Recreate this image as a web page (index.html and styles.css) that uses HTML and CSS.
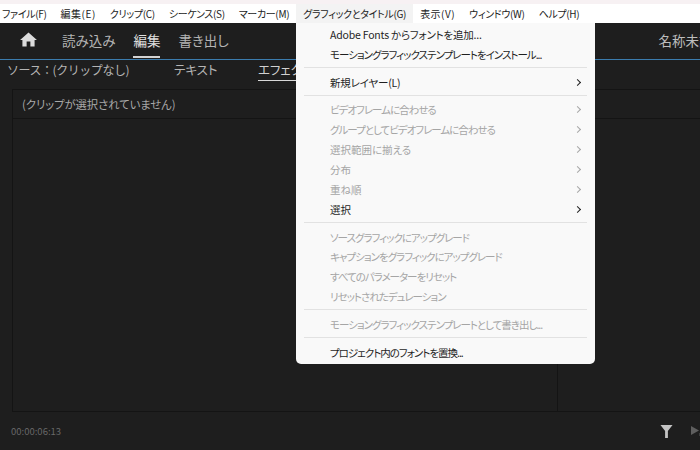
FILE: index.html
```html
<!DOCTYPE html>
<html>
  <head>
    <title>グラフィックとタイトル</title>
    <link rel="stylesheet" href="styles.css">
  </head>
  <body>
    <div class="menu-bar">
      <span class="menu-title">ファイル(F)</span>
      <span class="menu-title menu-title-wide">編集(E)</span>
      <span class="menu-title">クリップ(C)</span>
      <span class="menu-title">シーケンス(S)</span>
      <span class="menu-title">マーカー(M)</span>
      <span class="menu-title menu-title-open">グラフィックとタイトル(G)</span>
      <span class="menu-title menu-title-wide">表示(V)</span>
      <span class="menu-title">ウィンドウ(W)</span>
      <span class="menu-title">ヘルプ(H)</span>
    </div>

    <div class="app">
      <div class="workspace-bar">
        <svg class="home-icon" viewBox="0 0 18 16">
          <path d="M9 0.5 L18 8.5 H15.5 V15.5 H11 V10 H7 V15.5 H2.5 V8.5 H0 Z" fill="#dcdcdc"/>
        </svg>
        <span class="workspace-tab">読み込み</span>
        <span class="workspace-tab workspace-tab-active">編集</span>
        <span class="workspace-tab">書き出し</span>
        <span class="project-name">名称未設定</span>
      </div>

      <div class="panel-tabs">
        <span class="panel-tab panel-tab-source">ソース：(クリップなし)</span>
        <span class="panel-tab panel-tab-text">テキスト</span>
        <span class="panel-tab panel-tab-active">エフェクトコントロール</span>
      </div>

      <div class="panel">
        <div class="panel-header">(クリップが選択されていません)</div>
        <div class="panel-body">
          <div class="panel-left"></div>
          <div class="panel-right"></div>
        </div>
      </div>

      <div class="status-bar">
        <span class="timecode">00:00:06:13</span>
        <svg class="filter-icon" viewBox="0 0 14 15">
          <path d="M0.5 0.5 H13.5 L8.5 7 V14.5 H5.5 V7 Z" fill="#c4c4c4"/>
        </svg>
        <svg class="play-icon" viewBox="0 0 12 12">
          <path d="M0 1 L8 5.5 L0 10 Z" fill="#5e5e5e"/>
          <rect x="8.5" y="8" width="3.5" height="3" fill="#5e5e5e"/>
        </svg>
      </div>
    </div>

    <div class="dropdown">
      <div class="item item-slight">Adobe Fonts からフォントを追加...</div>
      <div class="item item-narrow">モーショングラフィックステンプレートをインストール...</div>
      <div class="separator"></div>
      <div class="item item-slight">新規レイヤー(L)<span class="arrow"></span></div>
      <div class="separator"></div>
      <div class="item item-narrow disabled">ビデオフレームに合わせる<span class="arrow"></span></div>
      <div class="item item-narrow disabled">グループとしてビデオフレームに合わせる<span class="arrow"></span></div>
      <div class="item disabled">選択範囲に揃える<span class="arrow"></span></div>
      <div class="item disabled">分布<span class="arrow"></span></div>
      <div class="item disabled">重ね順<span class="arrow"></span></div>
      <div class="item">選択<span class="arrow"></span></div>
      <div class="separator"></div>
      <div class="item item-narrow disabled">ソースグラフィックにアップグレード</div>
      <div class="item item-narrow disabled">キャプションをグラフィックにアップグレード</div>
      <div class="item item-narrow disabled">すべてのパラメーターをリセット</div>
      <div class="item item-narrow disabled">リセットされたデュレーション</div>
      <div class="separator"></div>
      <div class="item item-narrow disabled">モーショングラフィックステンプレートとして書き出し...</div>
      <div class="separator"></div>
      <div class="item item-narrow">プロジェクト内のフォントを置換...</div>
    </div>
  </body>
</html>
```

FILE: styles.css
```css
body {
  margin: 0;
  width: 700px;
  height: 450px;
  overflow: hidden;
  position: relative;
  display: flex;
  flex-direction: column;
  background-color: white;
  font-family: "Noto Sans CJK JP", "Noto Sans", sans-serif;
  font-feature-settings: "palt";
}

.menu-bar {
  height: 19px;
  box-sizing: border-box;
  margin-top: 4px;
  padding: 0 0 1px 2px;
  display: flex;
  align-items: center;
  gap: 14px;
  font-size: 10px;
  letter-spacing: -0.33px;
  color: #222222;
  box-shadow: 0 -4px 0 #f7f1f3;
}

.menu-title {
  white-space: nowrap;
}

.menu-title-wide {
  letter-spacing: 0.5px;
}

.menu-title-open {
  background-color: #f3f3f3;
  margin: 0 -7px;
  padding: 0 7px;
  line-height: 19px;
}

.app {
  flex: 1;
  display: flex;
  flex-direction: column;
  background-color: #1e1e1e;
  color: #b4b4b4;
  min-height: 0;
}

.workspace-bar {
  height: 33px;
  flex-shrink: 0;
  display: flex;
  align-items: center;
  padding: 0 0 3px 20px;
  border-bottom: 1px solid #3b7cae;
  font-size: 13.5px;
}

.home-icon {
  width: 17px;
  height: 15px;
  margin-right: 25px;
}

.workspace-tab {
  margin-right: 18px;
  position: relative;
}

.workspace-tab-active {
  color: #e0e0e0;
}

.workspace-tab-active::after {
  content: "";
  position: absolute;
  left: 0;
  right: 0;
  bottom: -8px;
  height: 2px;
  background-color: #d4d4d4;
}

.project-name {
  margin-left: auto;
  white-space: nowrap;
  margin-right: -26px;
  color: #bdbdbd;
}

.panel-tabs {
  height: 29px;
  box-sizing: border-box;
  flex-shrink: 0;
  padding: 0 0 10px 7px;
  display: flex;
  align-items: center;
  font-size: 12.5px;
}

.panel-tab {
  white-space: nowrap;
  position: relative;
}

.panel-tab-source {
  width: 167px;
  font-feature-settings: normal;
  font-size: 12px;
  letter-spacing: -0.45px;
}

.panel-tab-text {
  width: 84px;
}

.panel-tab-active {
  color: #d0d0d0;
}

.panel-tab-active::after {
  content: "";
  position: absolute;
  left: 0;
  right: 0;
  bottom: -2px;
  height: 1px;
  background-color: #d8d8d8;
}

.panel {
  height: 323px;
  box-sizing: border-box;
  flex-shrink: 0;
  margin-left: 12px;
  display: flex;
  flex-direction: column;
  border: 1px solid #141414;
  border-right: none;
}

.panel-header {
  height: 29px;
  box-sizing: border-box;
  flex-shrink: 0;
  display: flex;
  align-items: center;
  padding: 0 0 1px 9px;
  font-size: 11.3px;
  color: #a8a8a8;
  border-bottom: 1px solid #141414;
}

.panel-body {
  flex: 1;
  display: flex;
}

.panel-left {
  width: 544px;
  border-right: 1px solid #141414;
}

.panel-right {
  flex: 1;
}

.status-bar {
  flex: 1;
  display: flex;
  align-items: center;
  padding-left: 11px;
  overflow: hidden;
}

.timecode {
  font-size: 9.5px;
  color: #686868;
}

.filter-icon {
  width: 13px;
  height: 15px;
  margin-left: auto;
  margin-right: 18px;
}

.play-icon {
  width: 12px;
  height: 12px;
  margin-right: -3px;
}

.dropdown {
  position: absolute;
  left: 296px;
  top: 23px;
  width: 299px;
  height: 341px;
  box-sizing: border-box;
  padding-top: 1.5px;
  background-color: #f9f9f9;
  border-radius: 0 0 5px 5px;
  font-size: 10.5px;
  color: #1f1f1f;
}

.item {
  height: 19.85px;
  display: flex;
  align-items: center;
  justify-content: space-between;
  padding: 0 15px 0 34px;
  white-space: nowrap;
}

.item-narrow {
  letter-spacing: -1px;
}

.item-slight {
  letter-spacing: -0.2px;
}

.disabled {
  color: #a5a5a5;
}

.arrow {
  width: 5px;
  height: 5px;
  box-sizing: border-box;
  border-top: 1.3px solid currentColor;
  border-right: 1.3px solid currentColor;
  transform: rotate(45deg);
}

.separator {
  height: 1px;
  margin: 3px 8px 4px 8px;
  background-color: #e2e2e2;
}
```
